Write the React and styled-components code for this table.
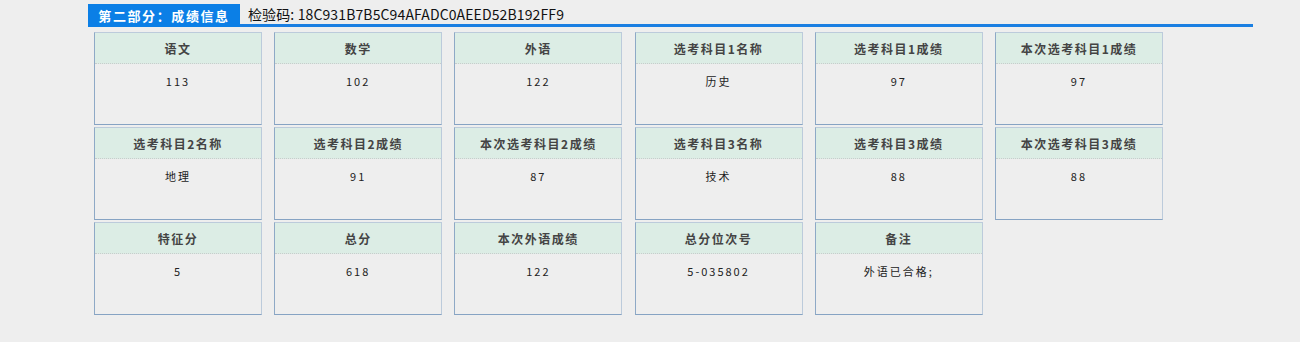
import React from "react";
import styled, { createGlobalStyle } from "styled-components";

const GlobalStyle = createGlobalStyle`
  html, body {
    margin: 0;
    padding: 0;
    background: #eeeeee;
    font-family: "Noto Sans CJK SC", "Noto Sans", sans-serif;
  }
`;

const scores = [
  { title: "语文", value: "113" },
  { title: "数学", value: "102" },
  { title: "外语", value: "122" },
  { title: "选考科目1名称", value: "历史" },
  { title: "选考科目1成绩", value: "97" },
  { title: "本次选考科目1成绩", value: "97" },
  { title: "选考科目2名称", value: "地理" },
  { title: "选考科目2成绩", value: "91" },
  { title: "本次选考科目2成绩", value: "87" },
  { title: "选考科目3名称", value: "技术" },
  { title: "选考科目3成绩", value: "88" },
  { title: "本次选考科目3成绩", value: "88" },
  { title: "特征分", value: "5" },
  { title: "总分", value: "618" },
  { title: "本次外语成绩", value: "122" },
  { title: "总分位次号", value: "5-035802" },
  { title: "备注", value: "外语已合格;" },
];

const App = () => {
  return (
    <StPage>
      <GlobalStyle />
      <StHeader>
        <StTab>第二部分：成绩信息</StTab>
        <StCode>检验码: 18C931B7B5C94AFADC0AEED52B192FF9</StCode>
      </StHeader>
      <StGrid>
        {scores.map((s) => (
          <StCard key={s.title}>
            <StCardTitle>{s.title}</StCardTitle>
            <StCardValue>{s.value}</StCardValue>
          </StCard>
        ))}
      </StGrid>
    </StPage>
  );
};

export default App;

const StPage = styled.div`
  width: 1300px;
  height: 342px;
  padding: 4px 0 0 88px;
  box-sizing: border-box;
`;

const StHeader = styled.div`
  width: 1165px;
  height: 23px;
  display: flex;
  align-items: stretch;
`;

const StTab = styled.div`
  width: 152px;
  background-color: #0b7fe6;
  color: white;
  font-size: 13px;
  font-weight: bold;
  letter-spacing: 1.6px;
  display: flex;
  align-items: center;
  justify-content: center;
`;

const StCode = styled.div`
  flex: 1;
  border-bottom: 3px solid #1a7fe2;
  color: #111;
  font-size: 14px;
  letter-spacing: 0.12px;
  padding-left: 8px;
  line-height: 20px;
  box-sizing: border-box;
`;

const StGrid = styled.div`
  display: grid;
  grid-template-columns: repeat(6, 168px);
  column-gap: 12.2px;
  row-gap: 2px;
  margin: 5px 0 0 6px;
`;

const StCard = styled.div`
  height: 93px;
  box-sizing: border-box;
  border: 1px solid #bccbdb;
  border-left-color: #8ea9c6;
  border-bottom-color: #86a3c3;
  background-color: #eeeeee;
`;

const StCardTitle = styled.div`
  height: 30px;
  background-color: #dcede5;
  border-bottom: 1px dotted #c8cccc;
  color: #444;
  font-size: 12px;
  font-weight: bold;
  letter-spacing: 1.5px;
  display: flex;
  align-items: center;
  justify-content: center;
`;

const StCardValue = styled.div`
  padding-top: 9px;
  text-align: center;
  color: #222;
  font-size: 11px;
  letter-spacing: 2px;
`;
